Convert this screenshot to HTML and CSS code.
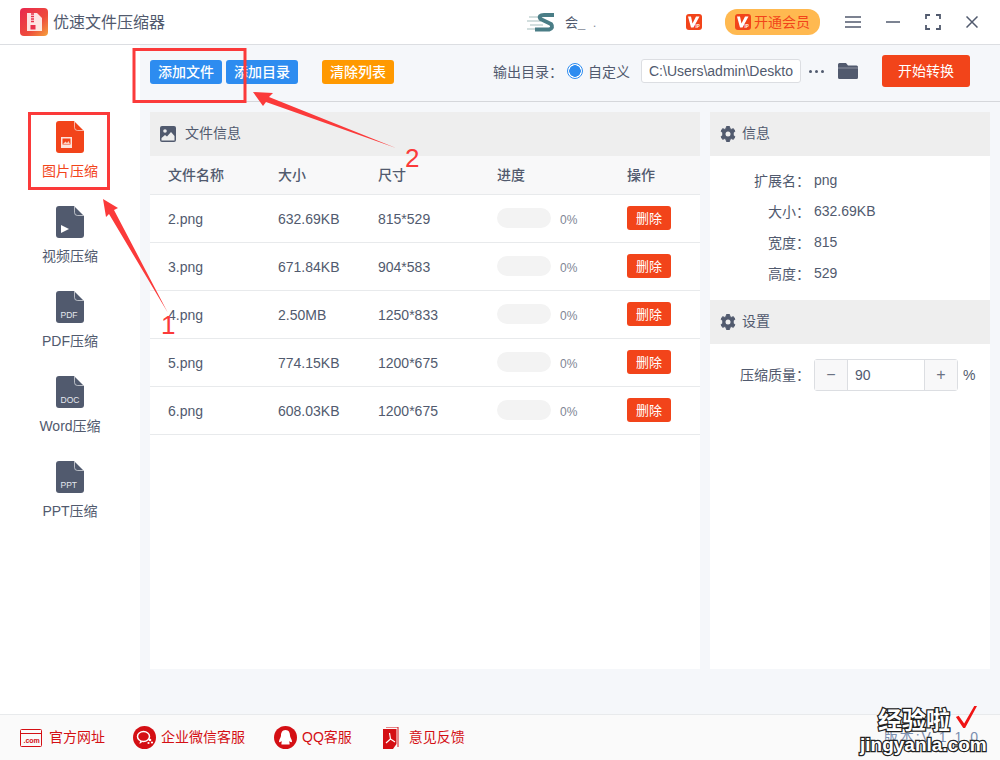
FILE: index.html
```html
<!DOCTYPE html>
<html lang="zh-CN">
<head>
    <meta charset="UTF-8">
    <meta name="viewport" content="width=device-width, initial-scale=1.0">
    <title>优速文件压缩器</title>
    <link rel="stylesheet" href="styles.css">
</head>
<body>
    <svg class="defs" width="0" height="0">
        <symbol id="doc" viewBox="0 0 28 32">
            <path d="M3 0H18L28 10V29Q28 32 25 32H3Q0 32 0 29V3Q0 0 3 0Z" fill="currentColor"/>
            <path d="M18.500 0.500V6.500Q18.500 9.500 21.500 9.500H27.500" fill="none" stroke="#fff" stroke-opacity="0.75" stroke-width="0.800"/>
        </symbol>
        <symbol id="gear" viewBox="0 0 16 16">
            <path d="M6.500 0.500H9.500L10 2.700 11.200 3.400 13.400 2.700 14.900 5.300 13.200 6.800V9.200L14.900 10.700 13.400 13.300 11.200 12.600 10 13.300 9.500 15.500H6.500L6 13.300 4.800 12.600 2.600 13.300 1.100 10.700 2.800 9.200V6.800L1.100 5.300 2.600 2.700 4.800 3.400 6 2.700Z" fill="#515a6e" stroke="#515a6e" stroke-linejoin="round"/>
            <circle cx="8" cy="8" r="2.500" fill="#eee"/>
        </symbol>
        <symbol id="vip" viewBox="0 0 16 16">
            <rect width="16" height="16" rx="3" fill="#f2441a"/>
            <path d="M2 2.500H5L6.500 9.500 10 2.500H13.500L7.500 13.500H5Z" fill="#fff"/>
        </symbol>
    </svg>

    <div class="app">
        <header class="titlebar">
            <svg class="logo" width="28" height="28" viewBox="0 0 28 28">
                <defs>
                    <linearGradient id="logoGrad" x1="0" y1="0" x2="1" y2="1">
                        <stop offset="0" stop-color="#e8264f"/>
                        <stop offset="0.6" stop-color="#ee4b3c"/>
                        <stop offset="1" stop-color="#f5a33c"/>
                    </linearGradient>
                </defs>
                <rect width="28" height="28" rx="4" fill="url(#logoGrad)"/>
                <path d="M7 5H17L22 10V23H7Z" fill="#fff" fill-opacity="0.85"/>
                <path d="M11 6H14M11 8.500H14M11 11H14M11 13.500H14" stroke="#e8304a" stroke-width="1.300"/>
                <rect x="10.500" y="17" width="5" height="4.500" fill="#e8304a"/>
            </svg>
            <span class="app-name">优速文件压缩器</span>

            <div class="user">
                <svg class="user-logo" width="30" height="22" viewBox="0 0 30 22">
                    <path d="M2 6H14M0 10H14M3 14H16M0 18H14" stroke="#c3d3d4" stroke-width="1.500"/>
                    <path d="M27 4H17Q11 4 13.500 8L24 13Q27 17 22 18.500H8" fill="none" stroke="#4a7d86" stroke-width="4"/>
                </svg>
                <span class="user-name">会<i class="dim">_ .</i></span>
                <svg class="user-vip" width="16" height="16" viewBox="0 0 16 16"><use href="#vip"/><text x="9.500" y="13.500" class="vip-ip">IP</text></svg>
            </div>
            <div class="vip-btn">
                <svg width="16" height="16" viewBox="0 0 16 16"><use href="#vip"/><text x="9.500" y="13.500" class="vip-ip">IP</text></svg>
                <span>开通会员</span>
            </div>
            <div class="win-btns">
                <svg width="16" height="12" viewBox="0 0 16 12"><path d="M0 1H16M0 6H16M0 11H16" stroke="#515a6e" stroke-width="1.500"/></svg>
                <svg width="14" height="12" viewBox="0 0 14 12"><path d="M0 6H14" stroke="#515a6e" stroke-width="1.500"/></svg>
                <svg width="16" height="16" viewBox="0 0 16 16"><path d="M1 5V1H5M11 1H15V5M15 11V15H11M5 15H1V11" fill="none" stroke="#515a6e" stroke-width="1.800"/></svg>
                <svg width="12" height="12" viewBox="0 0 12 12"><path d="M0.500 0.500L11.500 11.500M11.500 0.500L0.500 11.500" stroke="#515a6e" stroke-width="1.500"/></svg>
            </div>
        </header>

        <div class="main">
            <nav class="sidebar">
                <div class="nav-item active">
                    <svg width="28" height="32"><use href="#doc"/>
                        <rect x="5" y="16" width="11" height="11" fill="#fff" fill-opacity="0.85"/>
                        <rect x="6.500" y="17.500" width="8" height="6" fill="#f2441a"/>
                        <path d="M7 23L9.500 20.500 11 22 12.500 20 14 23Z" fill="#ffd0c0"/>
                    </svg>
                    <span>图片压缩</span>
                </div>
                <div class="nav-item">
                    <svg width="28" height="32"><use href="#doc"/>
                        <path d="M5 19L13 23 5 27Z" fill="#fff"/>
                    </svg>
                    <span>视频压缩</span>
                </div>
                <div class="nav-item">
                    <svg width="28" height="32"><use href="#doc"/>
                        <text x="4.500" y="27" class="doc-label">PDF</text>
                    </svg>
                    <span>PDF压缩</span>
                </div>
                <div class="nav-item">
                    <svg width="28" height="32"><use href="#doc"/>
                        <text x="4.500" y="27" class="doc-label">DOC</text>
                    </svg>
                    <span>Word压缩</span>
                </div>
                <div class="nav-item">
                    <svg width="28" height="32"><use href="#doc"/>
                        <text x="4.500" y="27" class="doc-label">PPT</text>
                    </svg>
                    <span>PPT压缩</span>
                </div>
            </nav>

            <div class="content">
                <div class="toolbar">
                    <button class="btn blue-btn">添加文件</button>
                    <button class="btn blue-btn">添加目录</button>
                    <button class="btn orange-btn">清除列表</button>
                    <div class="output">
                        <span class="output-label">输出目录：</span>
                        <span class="radio"></span>
                        <span class="radio-text">自定义</span>
                        <div class="path-input">C:\Users\admin\Deskto</div>
                        <span class="dots">
                            <i></i><i></i><i></i>
                        </span>
                        <svg class="folder" width="20" height="16" viewBox="0 0 20 16"><path d="M1.500 0H8L10 2.500H18.500Q20 2.500 20 4V14.500Q20 16 18.500 16H1.500Q0 16 0 14.500V1.500Q0 0 1.500 0Z" fill="#515a6e"/><path d="M0 5H20" stroke="#fff" stroke-opacity="0.5" stroke-width="0.700"/></svg>
                        <button class="start-btn">开始转换</button>
                    </div>
                </div>

                <div class="panels">
                    <section class="panel file-panel">
                        <div class="panel-head">
                            <svg width="16" height="16" viewBox="0 0 16 16"><rect width="16" height="16" rx="2" fill="#515a6e"/><circle cx="5" cy="5" r="1.800" fill="#eee"/><path d="M1.500 14.500V12L5 9 7 10.500 11 6 14.500 10V14.500Z" fill="#eee"/></svg>
                            <span>文件信息</span>
                        </div>
                        <table class="file-table">
                            <colgroup>
                                <col class="col-name"><col class="col-size"><col class="col-dim"><col class="col-prog"><col>
                            </colgroup>
                            <thead>
                                <tr><th>文件名称</th><th>大小</th><th>尺寸</th><th>进度</th><th>操作</th></tr>
                            </thead>
                            <tbody>
                                <tr><td>2.png</td><td>632.69KB</td><td>815*529</td><td><div class="progress"><div class="bar"></div><span>0%</span></div></td><td><button class="del-btn">删除</button></td></tr>
                                <tr><td>3.png</td><td>671.84KB</td><td>904*583</td><td><div class="progress"><div class="bar"></div><span>0%</span></div></td><td><button class="del-btn">删除</button></td></tr>
                                <tr><td>4.png</td><td>2.50MB</td><td>1250*833</td><td><div class="progress"><div class="bar"></div><span>0%</span></div></td><td><button class="del-btn">删除</button></td></tr>
                                <tr><td>5.png</td><td>774.15KB</td><td>1200*675</td><td><div class="progress"><div class="bar"></div><span>0%</span></div></td><td><button class="del-btn">删除</button></td></tr>
                                <tr><td>6.png</td><td>608.03KB</td><td>1200*675</td><td><div class="progress"><div class="bar"></div><span>0%</span></div></td><td><button class="del-btn">删除</button></td></tr>
                            </tbody>
                        </table>
                    </section>

                    <section class="panel side-panel">
                        <div class="panel-head gear-head">
                            <svg width="16" height="16"><use href="#gear"/></svg>
                            <span>信息</span>
                        </div>
                        <dl class="info-list">
                            <dt>扩展名：</dt><dd>png</dd>
                            <dt>大小：</dt><dd>632.69KB</dd>
                            <dt>宽度：</dt><dd>815</dd>
                            <dt>高度：</dt><dd>529</dd>
                        </dl>
                        <div class="panel-head gear-head">
                            <svg width="16" height="16"><use href="#gear"/></svg>
                            <span>设置</span>
                        </div>
                        <div class="quality">
                            <span class="quality-label">压缩质量：</span>
                            <div class="stepper">
                                <span class="step">−</span>
                                <span class="step-value">90</span>
                                <span class="step">+</span>
                            </div>
                            <span class="percent">%</span>
                        </div>
                    </section>
                </div>
            </div>
        </div>

        <footer class="footer">
            <a class="foot-link">
                <svg width="22" height="18" viewBox="0 0 22 18"><rect x="0.500" y="0.500" width="21" height="17" rx="1" fill="none" stroke="#d40f14"/><path d="M1 4.500H21" stroke="#d40f14"/><text x="3.500" y="14" font-size="7" font-weight="bold" font-family="Liberation Sans" fill="#d40f14">.com</text></svg>
                <span>官方网址</span>
            </a>
            <a class="foot-link link-wx">
                <svg width="23" height="23" viewBox="0 0 23 23"><circle cx="11.500" cy="11.500" r="11.500" fill="#d40f14"/><ellipse cx="10.500" cy="10.500" rx="6" ry="5" fill="none" stroke="#fff" stroke-width="1.500"/><path d="M7 15L6.500 18 10 15.500Z" fill="#fff"/><circle cx="17" cy="14" r="1.300" fill="#fff"/><circle cx="19" cy="16.500" r="1.100" fill="#fff"/><circle cx="15.500" cy="17" r="1.100" fill="#fff"/></svg>
                <span>企业微信客服</span>
            </a>
            <a class="foot-link link-qq">
                <svg width="23" height="23" viewBox="0 0 23 23"><circle cx="11.500" cy="11.500" r="11.500" fill="#d40f14"/><path d="M11.500 4C8 4 7 7 7 9.500 7 11.500 5 13.500 5 15.500 5 16.500 6 16.500 7.500 15 8 17 7 17.500 7.500 18.500H15.500C16 17.500 15 17 15.500 15 17 16.500 18 16.500 18 15.500 18 13.500 16 11.500 16 9.500 16 7 15 4 11.500 4Z" fill="#fff"/></svg>
                <span>QQ客服</span>
            </a>
            <a class="foot-link link-fb">
                <svg width="16" height="22" viewBox="0 0 16 22"><path d="M3 0H15V20" fill="none" stroke="#d40f14"/><path d="M0 2H13.500V17L10 22H0Z" fill="#d40f14"/><path d="M6.500 6L7.500 12 3 16M7.500 12L12 15" fill="none" stroke="#fff" stroke-width="1.200"/></svg>
                <span>意见反馈</span>
            </a>
            <span class="version">版本:V 1.1.0</span>
        </footer>
    </div>

    <!-- 标注层 -->
    <svg class="marks" width="1000" height="760" viewBox="0 0 1000 760">
        <rect x="29.500" y="113.500" width="79" height="75" fill="none" stroke="#fb3a3a" stroke-width="3"/>
        <rect x="134" y="49.500" width="111" height="52" fill="none" stroke="#fb3a3a" stroke-width="3"/>
        <path d="M103 199L118 208 114 210 168 313 109 214 106 217Z" fill="#fb3a3a"/>
        <path d="M253 92L273 93 269 97 396 148 266 102 263 106Z" fill="#fb3a3a"/>
        <text x="161" y="334" class="mark-num">1</text>
        <text x="405" y="167" class="mark-num">2</text>
    </svg>

    <div class="watermark">
        <div class="wm-cn">经验啦<svg width="22" height="24" viewBox="0 0 24 26"><path d="M1 13L4 11.500 10 20 21 1H24L11 25H9Z" fill="#f01414"/></svg></div>
        <div class="wm-en">jingyanla.com</div>
    </div>
</body>
</html>
```

FILE: styles.css
```css
* {
    box-sizing: border-box;
}
body {
    margin: 0;
    font-family: "Liberation Sans", "Noto Sans CJK SC", sans-serif;
    font-size: 14px;
    color: #515a6e;
    background-color: #fff;
    position: relative;
    width: 1000px;
    height: 760px;
    overflow: hidden;
}
.defs {
    position: absolute;
}
.app {
    display: flex;
    flex-direction: column;
    height: 760px;
}

/* 标题栏 */
.titlebar {
    height: 45px;
    flex: none;
    display: flex;
    align-items: center;
    padding-left: 20px;
    border-bottom: 1px solid #dcdee2;
    background-color: #fff;
}
.app-name {
    margin-left: 5px;
    margin-bottom: 2px;
    font-size: 16px;
}
.user {
    margin-left: 362px;
    width: 175px;
    flex: none;
    display: flex;
    align-items: center;
}
.user-logo {
    flex: none;
}
.user-name {
    margin-left: 8px;
    margin-bottom: 2px;
    font-size: 13px;
    white-space: nowrap;
}
.dim {
    font-style: normal;
    color: #8a8f9c;
    letter-spacing: 2px;
}
.user-vip {
    margin-left: auto;
    flex: none;
}
.vip-ip {
    font-family: "Liberation Sans", sans-serif;
    font-size: 4.500px;
    font-weight: bold;
    fill: #fff;
}
.vip-btn {
    margin-left: 23px;
    width: 95px;
    height: 26px;
    border-radius: 12px;
    background-color: #ffb950;
    color: #f2441a;
    display: flex;
    align-items: center;
    justify-content: center;
    gap: 3px;
}
.vip-btn span {
    margin-bottom: 2px;
}
.win-btns {
    margin-left: 25px;
    display: flex;
    align-items: center;
    gap: 25px;
}

/* 主体 */
.main {
    flex: 1;
    display: flex;
    min-height: 0;
}
.sidebar {
    width: 140px;
    flex: none;
    background-color: #fff;
    padding-top: 76px;
    display: flex;
    flex-direction: column;
    align-items: center;
}
.nav-item {
    height: 85px;
    width: 100%;
    display: flex;
    flex-direction: column;
    align-items: center;
    color: #515a6e;
}
.nav-item svg {
    display: block;
}
.nav-item span {
    margin-top: 8px;
    line-height: 20px;
}
.nav-item.active {
    color: #f2441a;
}
.doc-label {
    font-family: "Liberation Sans", sans-serif;
    font-size: 8.500px;
    fill: #e6e8ee;
}
.content {
    flex: 1;
    min-width: 0;
    display: flex;
    flex-direction: column;
    background-color: #f5f7fa;
}

/* 工具栏 */
.toolbar {
    height: 57px;
    flex: none;
    display: flex;
    align-items: center;
    padding: 0 0 4px 10px;
    border-bottom: 1px solid #d5d7db;
}
.btn {
    width: 72px;
    height: 24px;
    margin-top: 2px;
    padding: 0 0 2px;
    border: none;
    border-radius: 3px;
    color: #fff;
    font-family: inherit;
    font-size: 14px;
    font-weight: 500;
}
.blue-btn {
    background-color: #2d8cf0;
    margin-right: 4px;
}
.orange-btn {
    background-color: #ff9900;
    margin-left: 20px;
}
.output {
    margin-left: 99px;
    display: flex;
    align-items: center;
}
.output-label {
    width: 74px;
    white-space: nowrap;
}
.radio {
    width: 16px;
    height: 16px;
    border-radius: 50%;
    border: 1px solid #2d8cf0;
    background: radial-gradient(circle, #2d8cf0 0 5.5px, #fff 6px);
}
.radio-text {
    margin-left: 5px;
    width: 53px;
}
.path-input {
    width: 160px;
    height: 24px;
    line-height: 22px;
    padding-left: 7px;
    border: 1px solid #dcdee2;
    border-radius: 3px;
    background-color: #fff;
    overflow: hidden;
    white-space: nowrap;
}
.dots {
    margin-left: 8px;
    display: flex;
    gap: 3px;
}
.dots i {
    width: 3px;
    height: 3px;
    border-radius: 50%;
    background-color: #515a6e;
}
.folder {
    margin-left: 14px;
}
.start-btn {
    margin-left: 24px;
    width: 88px;
    height: 32px;
    padding: 0 0 2px;
    border: none;
    border-radius: 3px;
    background-color: #f2441a;
    color: #fff;
    font-family: inherit;
    font-size: 14px;
}

/* 面板 */
.panels {
    flex: 1;
    min-height: 0;
    display: flex;
    gap: 10px;
    padding: 10px 10px 45px;
}
.panel {
    background-color: #fff;
}
.file-panel {
    width: 550px;
    flex: none;
}
.side-panel {
    flex: 1;
}
.panel-head {
    height: 44px;
    display: flex;
    align-items: center;
    gap: 9px;
    padding-left: 10px;
    background-color: #eee;
}
.panel-head span {
    margin-bottom: 5px;
}
.gear-head {
    gap: 6px;
}
.file-table {
    width: 100%;
    border-collapse: collapse;
    table-layout: fixed;
}
.col-name {
    width: 110px;
}
.col-size {
    width: 100px;
}
.col-dim {
    width: 119px;
}
.col-prog {
    width: 130px;
}
.file-table th,
.file-table td {
    padding: 0 0 0 18px;
    text-align: left;
    border-bottom: 1px solid #e8eaec;
}
.file-table th {
    height: 38px;
    padding-bottom: 2px;
    background-color: #f8f8f9;
    font-weight: 500;
    font-size: 14px;
}
.file-table td {
    height: 48px;
    padding-top: 2px;
    font-size: 14px;
}
.progress {
    display: flex;
    align-items: center;
    gap: 9px;
    margin-top: -2px;
    font-size: 12px;
    color: #808695;
}
.progress span {
    margin-top: 3px;
}
.bar {
    width: 54px;
    height: 20px;
    border-radius: 10px;
    background-color: #f3f3f3;
}
.del-btn {
    display: block;
    width: 44px;
    height: 24px;
    margin-top: -2px;
    padding: 0 0 2px;
    border: none;
    border-radius: 3px;
    background-color: #f2441a;
    color: #fff;
    font-family: inherit;
    font-size: 13px;
}
.info-list {
    margin: 0;
    height: 144px;
    padding-top: 8px;
    display: grid;
    grid-template-columns: 100px 1fr;
    grid-auto-rows: 31px;
    align-items: center;
}
.info-list dt {
    text-align: right;
}
.info-list dd {
    margin: 0 0 0 4px;
}
.quality {
    display: flex;
    align-items: center;
    padding-top: 15px;
}
.quality-label {
    width: 100px;
    margin-bottom: 3px;
    text-align: right;
    white-space: nowrap;
}
.stepper {
    margin-left: 4px;
    width: 144px;
    height: 32px;
    display: flex;
    border: 1px solid #dcdee2;
    border-radius: 3px;
}
.step {
    width: 32px;
    flex: none;
    text-align: center;
    line-height: 29px;
    font-size: 16px;
    background-color: #f8f8f9;
    color: #6b7283;
}
.step-value {
    flex: 1;
    padding-left: 7px;
    line-height: 30px;
    border-left: 1px solid #dcdee2;
    border-right: 1px solid #dcdee2;
}
.percent {
    margin-left: 5px;
}

/* 底栏 */
.footer {
    height: 46px;
    flex: none;
    display: flex;
    align-items: center;
    padding-left: 20px;
    background-color: #fafafa;
    border-top: 1px solid #e8eaec;
    color: #d40f14;
    position: relative;
}
.foot-link {
    display: flex;
    align-items: center;
    gap: 7px;
}
.foot-link span {
    margin-bottom: 3px;
}
.link-wx {
    margin-left: 28px;
    gap: 5px;
}
.link-qq {
    margin-left: 29px;
    gap: 5px;
}
.link-fb {
    margin-left: 31px;
    gap: 10px;
}
.version {
    margin-left: auto;
    margin-right: 20px;
    margin-bottom: 3px;
    color: #7b8fb0;
    letter-spacing: 2px;
}

/* 标注层和水印 */
.marks {
    position: absolute;
    left: 0;
    top: 0;
}
.mark-num {
    font-family: "Liberation Sans", sans-serif;
    font-size: 26px;
    fill: #fb3a3a;
}
.watermark {
    position: absolute;
    left: 860px;
    top: 708px;
    width: 140px;
    font-weight: bold;
    color: #fff;
    paint-order: stroke fill;
    -webkit-text-stroke: 2.500px #222;
}
.wm-cn {
    display: flex;
    align-items: flex-start;
    padding-left: 18px;
    font-size: 24px;
    line-height: 26px;
}
.wm-cn svg {
    margin-left: 5px;
    margin-top: -3px;
}
.wm-en {
    font-size: 19px;
    line-height: 22px;
}
```
